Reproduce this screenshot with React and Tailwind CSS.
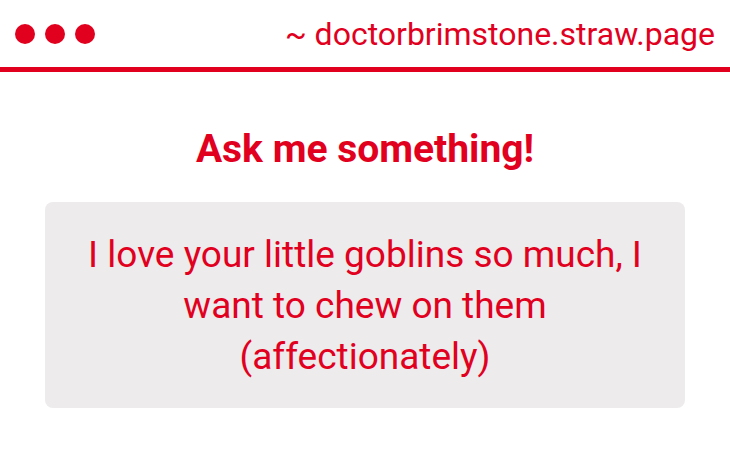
export default function App() {
  return (
    <div className="w-[730px] h-[453px] bg-white text-[#e1001e]" style={{ fontFamily: 'Roboto, sans-serif' }}>
      <header className="h-[72px] border-b-[5px] border-[#e1001e] flex items-center justify-between pl-[15px] pr-[15px]">
        <div className="flex gap-[10px]">
          <span className="w-5 h-5 rounded-full bg-[#e1001e]" />
          <span className="w-5 h-5 rounded-full bg-[#e1001e]" />
          <span className="w-5 h-5 rounded-full bg-[#e1001e]" />
        </div>
        <div className="text-[32px] leading-none">~ doctorbrimstone.straw.page</div>
      </header>
      <main className="flex flex-col items-center">
        <h1 className="mt-[54px] text-[39px] font-bold leading-[46px]">Ask me something!</h1>
        <div className="mt-[30px] w-[640px] h-[206px] rounded-lg bg-[#edebec] flex items-center justify-center px-6 text-center text-[37px] leading-[51px]">
          I love your little goblins so much, I want to chew on them (affectionately)
        </div>
      </main>
    </div>
  );
}
